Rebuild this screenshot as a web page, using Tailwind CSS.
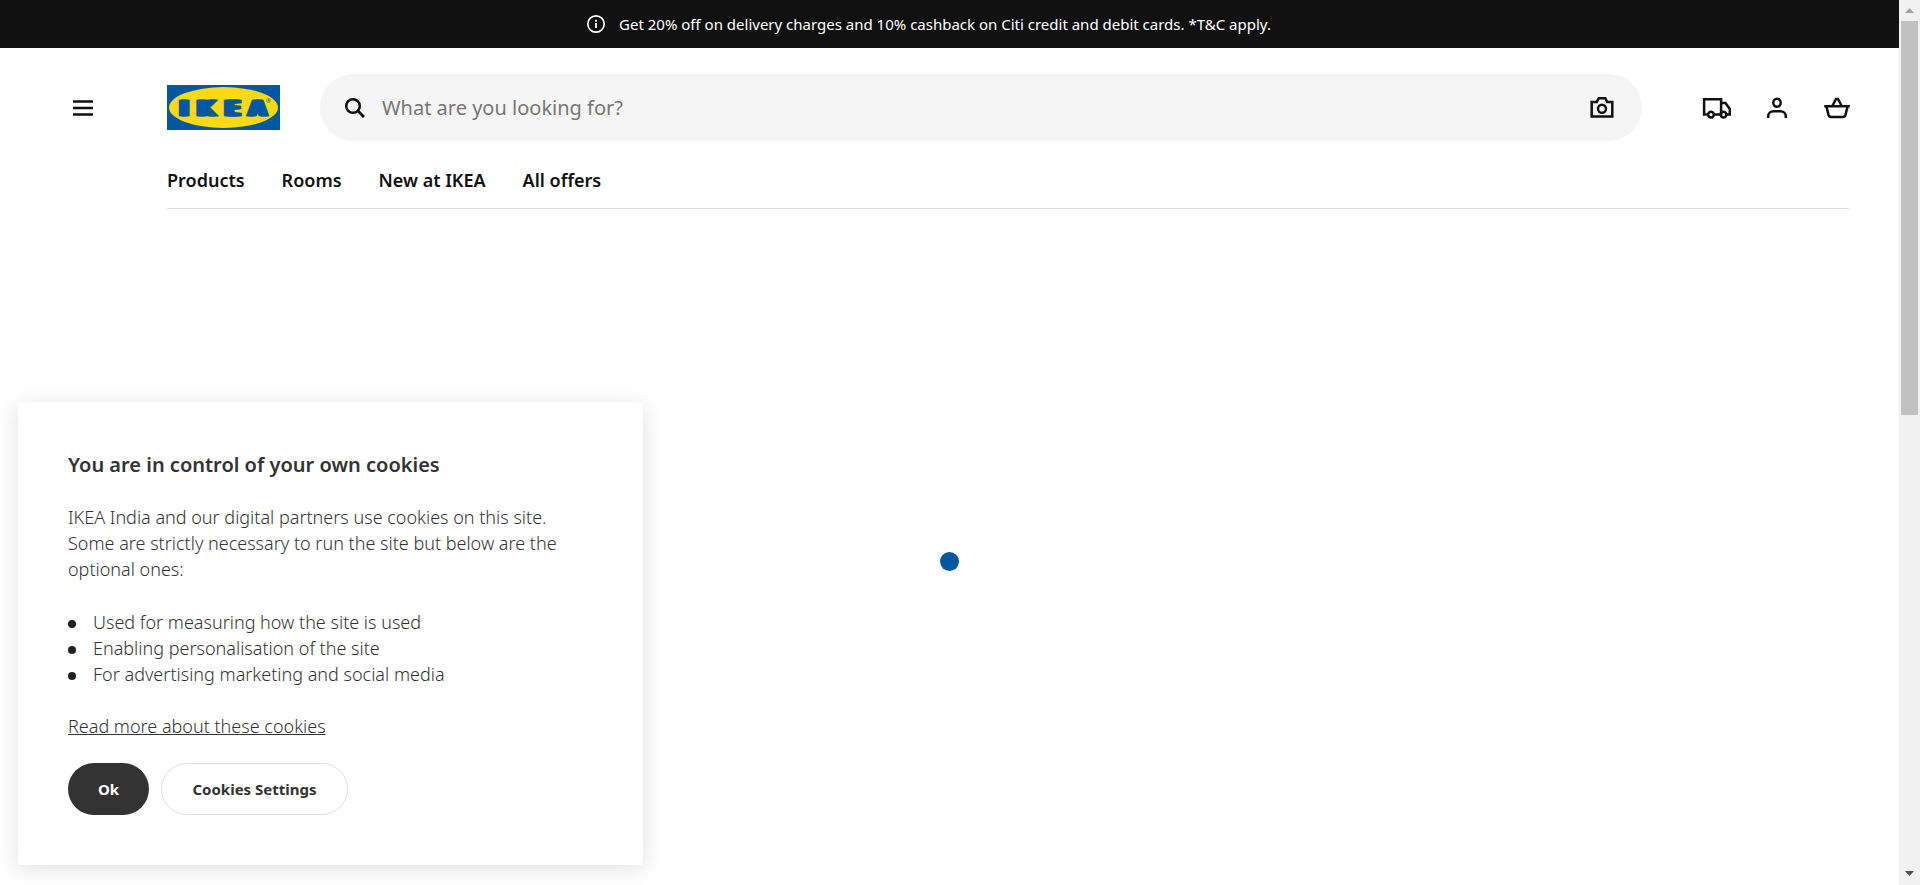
<!DOCTYPE html>
<html lang="en">
<head>
<meta charset="utf-8">
<meta name="viewport" content="width=device-width, initial-scale=1">
<title>IKEA India</title>
<script src="https://cdn.jsdelivr.net/npm/@tailwindcss/browser@4"></script>
</head>
<body class="flex h-screen overflow-hidden bg-white font-['Noto_Sans','Open_Sans',sans-serif] text-[#111111]">
  <div class="relative flex min-w-0 flex-1 flex-col">
    <aside class="flex h-12 shrink-0 items-center justify-center gap-[11px] bg-[#111111] pr-11 text-white" aria-label="Offer">
      <svg class="size-6" viewBox="0 0 24 24" fill="none" aria-hidden="true">
        <circle cx="12" cy="12" r="8.2" stroke="#fff" stroke-width="1.7"/>
        <path d="M12 11v5M12 7.8v2" stroke="#fff" stroke-width="1.8"/>
      </svg>
      <p class="text-[15px] leading-6">Get 20% off on delivery charges and 10% cashback on Citi credit and debit cards. *T&amp;C apply.</p>
    </aside>

    <header class="pr-[50px] pl-[68px]">
      <div class="flex items-center pt-[26px]">
        <button type="button" aria-label="Menu" class="flex size-[30px] items-center justify-center">
          <svg class="size-[30px]" viewBox="0 0 30 30" fill="none" aria-hidden="true">
            <path d="M5 8.5h20M5 15h20M5 21.5h20" stroke="#111" stroke-width="2.5"/>
          </svg>
        </button>
        <a href="#" aria-label="IKEA" class="ml-[69px] block shrink-0">
          <svg class="h-[45px] w-[113px]" viewBox="0 0 113 45" aria-hidden="true">
            <rect width="113" height="45" fill="#0058a3"/>
            <ellipse cx="56.5" cy="22.5" rx="54.5" ry="20.4" fill="#fbd914"/>
            <text class="[text-shadow:-3px_0_#0058a3,-2px_0_#0058a3,-1px_0_#0058a3,1px_0_#0058a3,2px_0_#0058a3,3px_0_#0058a3]" y="30.5" x="17 39 65.5 90.5" text-anchor="middle" font-family="DejaVu Sans" font-weight="700" font-size="22" fill="#0058a3" stroke="#0058a3" stroke-width="0.6">IKEA</text>
            <text x="99" y="18" font-family="Noto Sans" font-size="6" fill="#0058a3">®</text>
          </svg>
        </a>
        <form class="ml-10 flex h-[67px] flex-1 items-center rounded-full bg-[#f5f5f5] pr-[25px] pl-5" role="search">
          <svg class="size-[30px] shrink-0" viewBox="0 0 30 30" fill="none" aria-hidden="true">
            <circle cx="13" cy="13" r="6.8" stroke="#111" stroke-width="2.6"/>
            <path d="M17.8 17.8L24 24" stroke="#111" stroke-width="2.8"/>
          </svg>
          <input type="search" aria-label="Search" placeholder="What are you looking for?" class="ml-3 h-10 min-w-0 flex-1 bg-transparent text-xl outline-none placeholder:text-[#767676]">
          <button type="button" aria-label="Search by image" class="size-[30px]">
            <svg class="size-[30px]" viewBox="0 0 30 30" fill="none" aria-hidden="true">
              <path d="M4.7 23.5V9h5l2-3.8h6.6l2 3.8h5v14.5z" stroke="#111" stroke-width="2.5"/>
              <circle cx="15" cy="15.7" r="4" stroke="#111" stroke-width="2.4"/>
            </svg>
          </button>
        </form>
        <nav class="-mr-[3px] ml-[60px] flex gap-[30px]" aria-label="Account">
          <a href="#" aria-label="Delivery">
            <svg class="size-[30px]" viewBox="0 0 30 30" fill="none" stroke="#111" stroke-width="2.5" aria-hidden="true">
              <path d="M5.5 21.4H2.1V6.2h17v15.2h-7.6M19.5 10h4l4.3 6v5.4h-3.3"/>
              <circle cx="9" cy="21.6" r="2.9"/>
              <circle cx="21.5" cy="21.6" r="2.9"/>
            </svg>
          </a>
          <a href="#" aria-label="Profile">
            <svg class="size-[30px]" viewBox="0 0 30 30" fill="none" stroke="#111" stroke-width="2.5" aria-hidden="true">
              <ellipse cx="15" cy="9.7" rx="3.7" ry="4"/>
              <path d="M6.2 25v-1.8c0-3 2.4-5 5.4-5h6.8c3 0 5.4 2 5.4 5V25"/>
            </svg>
          </a>
          <a href="#" aria-label="Shopping bag">
            <svg class="size-[30px]" viewBox="0 0 30 30" fill="none" stroke="#111" stroke-width="2.5" aria-hidden="true">
              <path d="M2.2 13.3h25.6M4.4 13.3l2.1 8.6c.4 1.4 1.2 2 2.5 2h12c1.3 0 2.1-.6 2.5-2l2.1-8.6M10.2 13.3l3.8-7.4h2l3.8 7.4"/>
            </svg>
          </a>
        </nav>
      </div>
      <nav class="ml-[99px] flex h-[68px] gap-[37px] border-b border-[#dfdfdf] pt-[25px] text-lg leading-7 font-semibold" aria-label="Main">
        <a href="#">Products</a>
        <a href="#">Rooms</a>
        <a href="#">New at IKEA</a>
        <a href="#">All offers</a>
      </nav>
    </header>

    <main class="flex flex-1 items-center justify-center pt-7">
      <div class="size-[19px] rounded-full bg-[#0058a3]" role="status" aria-label="Loading"></div>
    </main>

    <section role="dialog" aria-labelledby="cookie-title" class="absolute bottom-5 left-[18px] w-[625px] rounded-[3px] bg-white px-[50px] py-[50px] text-lg leading-[26px] font-light text-[#333333] shadow-[0_4px_22px_rgba(0,0,0,0.12)]">
      <h2 id="cookie-title" class="text-xl leading-[26px] font-semibold">You are in control of your own cookies</h2>
      <p class="mt-[26px]">IKEA India and our digital partners use cookies on this site. Some are strictly necessary to run the site but below are the optional ones:</p>
      <ul class="mt-[27px]">
        <li class="flex items-center gap-[17px]"><span class="mt-1 size-2 rounded-full bg-[#222222]"></span>Used for measuring how the site is used</li>
        <li class="flex items-center gap-[17px]"><span class="mt-1 size-2 rounded-full bg-[#222222]"></span>Enabling personalisation of the site</li>
        <li class="flex items-center gap-[17px]"><span class="mt-1 size-2 rounded-full bg-[#222222]"></span>For advertising marketing and social media</li>
      </ul>
      <a href="#" class="mt-[26px] block underline">Read more about these cookies</a>
      <div class="mt-6 flex gap-3 text-[15px] font-bold">
        <button type="button" class="h-[52px] w-[81px] rounded-full bg-[#333333] text-white">Ok</button>
        <button type="button" class="h-[52px] w-[187px] rounded-full border border-[#dfdfdf] text-[#333333]">Cookies Settings</button>
      </div>
    </section>
  </div>

  <!-- Page scrollbar -->
  <div class="flex w-[21px] shrink-0 flex-col items-center bg-[#f1f1f1]" aria-hidden="true">
    <svg class="h-[21px] w-[21px]" viewBox="0 0 21 21"><path d="M6 13l4.5-5 4.5 5z" fill="#a3a3a3"/></svg>
    <div class="h-[394px] w-[17px] bg-[#c1c1c1]"></div>
    <svg class="mt-auto h-[21px] w-[21px]" viewBox="0 0 21 21"><path d="M6 7l4.5 5L15 7z" fill="#505050"/></svg>
  </div>
</body>
</html>
